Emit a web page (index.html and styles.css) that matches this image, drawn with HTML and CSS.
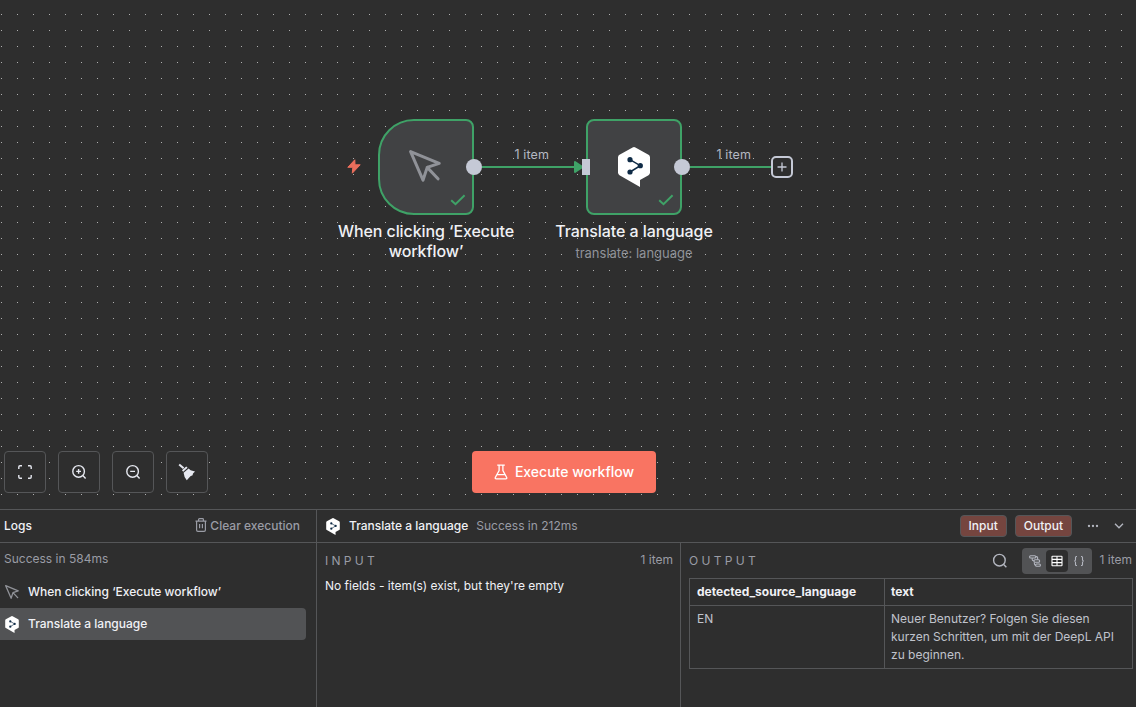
FILE: index.html
```html
<!DOCTYPE html>
<html lang="en">
<head>
    <meta charset="UTF-8">
    <meta name="viewport" content="width=device-width, initial-scale=1.0">
    <title>Workflow</title>
    <link rel="stylesheet" href="styles.css">
</head>
<body>
    <svg class="sprite" width="0" height="0">
        <symbol id="deepl" viewBox="0 0 32 40">
            <path fill="#fff" d="M0 10.4Q0 8.6 1.5 7.7L14.6.4Q16 -.4 17.4.4L30.5 7.7Q32 8.6 32 10.4V25.6Q32 27.4 30.5 28.3L22 33V40L1.5 28.3Q0 27.4 0 25.6Z"/>
            <path fill="none" stroke="#0f2b46" stroke-width="1.5" d="M12 12.7L22.3 18.7L12 25"/>
            <g fill="#0f2b46"><circle cx="12" cy="12.7" r="2.6"/><circle cx="22.3" cy="18.7" r="2.6"/><circle cx="12" cy="25" r="2.6"/></g>
        </symbol>
        <symbol id="pointer" viewBox="0 0 32 32">
            <path fill="none" stroke="#909298" stroke-width="3" stroke-linecap="round" stroke-linejoin="round" d="M1.6 1.6L30.2 13.4L18.2 17.4L14 30.2ZM18.2 17.4L29 28.8"/>
        </symbol>
        <symbol id="check" viewBox="0 0 16 12">
            <path fill="none" stroke="#3fa267" stroke-width="2" d="M1.2 6.2L5.5 10.2L14.6 1.2"/>
        </symbol>
    </svg>

    <div class="app">
        <main class="canvas">
            <svg class="edges" width="1136" height="509">
                <path class="edge" d="M482 167H576M690 167H771"/>
                <path class="arrow" d="M575 162L582.5 167L575 172Z"/>
            </svg>
            <span class="edge-label label-1">1 item</span>
            <span class="edge-label label-2">1 item</span>

            <svg class="bolt" width="14" height="15" viewBox="0 0 14 15"><path fill="#ea6e5c" stroke="#ea6e5c" stroke-linejoin="round" d="M7.8.8L.8 8.3H5.8L5.3 14.2L13.2 5.8H8Z"/></svg>
            <div class="node trigger">
                <svg class="node-icon" width="32" height="32"><use href="#pointer"/></svg>
                <svg class="check" width="16" height="12"><use href="#check"/></svg>
                <i class="handle-out"></i>
                <div class="node-text"><p class="node-name">When clicking ‘Execute workflow’</p></div>
            </div>
            <div class="node action">
                <svg class="node-icon" width="32" height="40"><use href="#deepl"/></svg>
                <svg class="check" width="16" height="12"><use href="#check"/></svg>
                <i class="handle-in"></i>
                <i class="handle-out"></i>
                <div class="node-text"><p class="node-name">Translate a language</p><p class="node-sub">translate: language</p></div>
            </div>
            <div class="plus"><svg width="10" height="10" viewBox="0 0 10 10"><path d="M5 .5V9.5M.5 5H9.5" stroke="#c5c9d6" stroke-width="1.3"/></svg></div>

            <div class="canvas-tools">
                <button class="tool"><svg width="16" height="16" viewBox="0 0 16 16"><path d="M1.8 5V3Q1.8 1.8 3 1.8H5M11 1.8H13Q14.2 1.8 14.2 3V5M14.2 11V13Q14.2 14.2 13 14.2H11M5 14.2H3Q1.8 14.2 1.8 13V11"/></svg></button>
                <button class="tool"><svg width="16" height="16" viewBox="0 0 16 16"><circle cx="7.6" cy="7.4" r="5.8"/><path d="M11.8 11.6L14.6 14.5M7.6 5V9.8M5.2 7.4H10"/></svg></button>
                <button class="tool"><svg width="16" height="16" viewBox="0 0 16 16"><circle cx="7.6" cy="7.4" r="5.8"/><path d="M11.8 11.6L14.6 14.5M5.2 7.4H10"/></svg></button>
                <button class="tool"><svg class="broom" width="18" height="18" viewBox="0 0 18 18"><path class="stick" d="M1.2 1.4L5.6 5.2"/><path class="head" d="M4 7.2L8.2 3.6L9.6 4.8L5.2 8.8ZM5.6 9.8L10.6 5.4L12.6 7.2L17 8.6L15 10.4L14.6 12.2L12.4 13.2L8.8 17.2L6.6 14Z"/></svg></button>
            </div>
            <button class="execute">
                <svg width="14" height="16" viewBox="0 0 14 16"><path d="M3.2 1.2H10.8M5.1 1.2V6.6L1.3 13.4Q.8 14.8 2.2 14.8H11.8Q13.2 14.8 12.7 13.4L8.9 6.6V1.2M3.2 10.6H10.8"/></svg>
                <span>Execute workflow</span>
            </button>
        </main>

        <section class="logs">
            <aside class="overview">
                <header class="bar">
                    <span class="title">Logs</span>
                    <button class="clear"><svg width="12" height="14" viewBox="0 0 12 14"><path d="M.5 3.2H11.5M3.6 3V1.4Q3.6.7 4.4.7H7.6Q8.4.7 8.4 1.4V3M1.6 3.4V12Q1.6 13.3 2.9 13.3H9.1Q10.4 13.3 10.4 12V3.4M4.6 6V10.3M7.4 6V10.3"/></svg>Clear execution</button>
                </header>
                <p class="summary">Success in 584ms</p>
                <div class="row"><svg width="14" height="14"><use href="#pointer"/></svg><span>When clicking ‘Execute workflow’</span></div>
                <div class="row selected"><svg width="14" height="17"><use href="#deepl"/></svg><span>Translate a language</span></div>
            </aside>

            <div class="details">
                <header class="bar">
                    <svg width="14" height="17"><use href="#deepl"/></svg>
                    <span class="title">Translate a language</span>
                    <span class="status">Success in 212ms</span>
                    <div class="actions">
                        <button class="toggle">Input</button>
                        <button class="toggle">Output</button>
                        <svg class="more" width="12" height="4" viewBox="0 0 12 4"><g fill="#b4b7c0"><circle cx="2" cy="2" r="1.15"/><circle cx="6" cy="2" r="1.15"/><circle cx="10" cy="2" r="1.15"/></g></svg>
                        <svg width="10" height="6" viewBox="0 0 10 6"><path d="M1 .8L5 4.8L9 .8" fill="none" stroke="#b4b7c0" stroke-width="1.3"/></svg>
                    </div>
                </header>
                <div class="panels">
                    <div class="panel input">
                        <div class="panel-head"><span class="caps">INPUT</span><span class="count">1 item</span></div>
                        <p class="empty">No fields - item(s) exist, but they're empty</p>
                    </div>
                    <div class="panel output">
                        <div class="panel-head">
                            <span class="caps">OUTPUT</span>
                            <svg class="search" width="16" height="16" viewBox="0 0 16 16"><circle cx="7.4" cy="7.2" r="5.8"/><path d="M11.6 11.4L14.4 14.3"/></svg>
                            <div class="segmented">
                                <span><svg width="12" height="12" viewBox="0 0 12 12"><rect x=".6" y=".8" width="6.2" height="2.2" rx="1"/><path d="M6.8 1.6H7.6Q8.6 1.6 8.6 2.6V4.8M3.2 3V4.6Q3.2 5.8 4.4 5.8H5M5.4 7.4V8.8Q5.4 10.2 6.8 10.2"/><rect x="5" y="4.8" width="5.6" height="2.4" rx="1"/><rect x="6.6" y="9" width="4.8" height="2.2" rx="1"/></svg></span>
                                <span class="active"><svg width="12" height="12" viewBox="0 0 12 12"><rect x="1" y="1.2" width="10" height="9.6" rx=".6"/><path d="M1 4.4H11M1 7.6H11M6 1.2V10.8"/></svg></span>
                                <span><svg width="12" height="12" viewBox="0 0 12 12"><path d="M4 1.5H3.4Q2.5 1.5 2.5 2.5V4.8Q2.5 6 1.2 6Q2.5 6 2.5 7.2V9.5Q2.5 10.5 3.4 10.5H4M8 1.5H8.6Q9.5 1.5 9.5 2.5V4.8Q9.5 6 10.8 6Q9.5 6 9.5 7.2V9.5Q9.5 10.5 8.6 10.5H8"/></svg></span>
                            </div>
                            <span class="count">1 item</span>
                        </div>
                        <table>
                            <tr><th class="lang">detected_source_language</th><th>text</th></tr>
                            <tr><td>EN</td><td>Neuer Benutzer? Folgen Sie diesen kurzen Schritten, um mit der DeepL API zu beginnen.</td></tr>
                        </table>
                    </div>
                </div>
            </div>
        </section>
    </div>
</body>
</html>
```
FILE: styles.css
```css
* {
    box-sizing: border-box;
}
body {
    margin: 0;
    background: #2e2e2e;
    color: #f0f1f5;
    font-family: Inter, sans-serif;
    font-size: 12px;
    overflow: hidden;
}
p {
    margin: 0;
}
svg {
    display: block;
    flex: none;
}
button {
    font: inherit;
    color: inherit;
    background: none;
    border: 0;
    padding: 0;
}
.sprite {
    position: absolute;
}
.app {
    display: flex;
    flex-direction: column;
    height: 707px;
}

/* canvas */
.canvas {
    position: relative;
    height: 509px;
    flex: none;
    background: conic-gradient(from 270deg at 1px 1px, #b0b0b0 90deg, transparent 0) 1px 14px / 16px 16px;
}
.edges {
    position: absolute;
    left: 0;
    top: 0;
}
.edge {
    stroke: #3fa267;
    stroke-width: 2;
}
.arrow {
    fill: #3fa267;
    stroke: #3fa267;
    stroke-width: 2;
    stroke-linejoin: round;
}
.edge-label {
    position: absolute;
    top: 147px;
    font-size: 12.5px;
    line-height: 16px;
    color: #b5b8c2;
    letter-spacing: .1px;
}
.label-1 {
    left: 514.5px;
}
.label-2 {
    left: 716.5px;
}
.bolt {
    position: absolute;
    left: 347px;
    top: 159px;
}
.node {
    position: absolute;
    top: 119px;
    width: 96px;
    height: 96px;
    border: 2px solid #3fa267;
    border-radius: 8px;
    background: #414244;
    display: flex;
    align-items: center;
    justify-content: center;
}
.trigger {
    left: 378px;
    border-radius: 36px 8px 8px 36px;
}
.trigger .node-icon {
    margin: 0 2px 2px 0;
}
.action {
    left: 586px;
}
.check {
    position: absolute;
    right: 6px;
    bottom: 7px;
}
.handle-out {
    position: absolute;
    right: -10px;
    top: 38px;
    width: 16px;
    height: 16px;
    border-radius: 50%;
    background: #c5c9d6;
}
.handle-in {
    position: absolute;
    left: -6px;
    top: 38px;
    width: 8px;
    height: 16px;
    background: #c5c9d6;
}
.node-text {
    position: absolute;
    top: 100px;
    left: -52px;
    width: 196px;
    text-align: center;
}
.node-name {
    font-size: 16px;
    line-height: 20px;
    font-weight: 500;
    letter-spacing: -.08px;
}
.node-sub {
    margin-top: 4px;
    font-size: 13px;
    line-height: 16px;
    color: #909298;
}
.plus {
    position: absolute;
    left: 771px;
    top: 156px;
    width: 22px;
    height: 22px;
    border: 2px solid #c5c9d6;
    border-radius: 5px;
    background: #2e2e2e;
    display: flex;
    align-items: center;
    justify-content: center;
}
.canvas-tools {
    position: absolute;
    left: 4px;
    bottom: 16px;
    display: flex;
    gap: 12px;
}
.tool {
    width: 42px;
    height: 42px;
    border: 1px solid #555658;
    border-radius: 4px;
    background: #2e2e2e;
    display: flex;
    align-items: center;
    justify-content: center;
}
.tool svg {
    fill: none;
    stroke: #e6e8f0;
    stroke-width: 1.4;
}
.broom .head {
    fill: #e6e8f0;
    stroke: none;
}
.broom .stick {
    stroke-width: 2;
}
.execute {
    position: absolute;
    left: 472px;
    bottom: 16px;
    width: 184px;
    height: 42px;
    border-radius: 4px;
    background: #f97462;
    color: #fff;
    font-size: 14px;
    font-weight: 500;
    display: flex;
    align-items: center;
    justify-content: center;
    gap: 7px;
}
.execute span {
    padding-bottom: 2px;
}
.execute svg {
    fill: none;
    stroke: #fff;
    stroke-width: 1.3;
}

/* logs panel */
.logs {
    flex: 1;
    display: flex;
    border-top: 1px solid #555658;
}
.overview {
    width: 316px;
    flex: none;
}
.bar {
    height: 33px;
    border-bottom: 1px solid #555658;
    display: flex;
    align-items: center;
}
.title {
    font-weight: 500;
}
.title,
.status,
.row span {
    padding-bottom: 2px;
}
.overview .bar {
    padding: 0 16px 0 4px;
    justify-content: space-between;
}
.clear {
    display: flex;
    align-items: center;
    gap: 3px;
    color: #9a9ca5;
    font-weight: 500;
    padding-bottom: 2px;
}
.clear svg {
    fill: none;
    stroke: #9a9ca5;
    stroke-width: 1.2;
}
.summary {
    padding: 8px 4px;
    line-height: 16px;
    height: 33px;
    color: #9a9ca5;
}
.row {
    height: 32px;
    width: 306px;
    padding-left: 5px;
    display: flex;
    align-items: center;
    gap: 9px;
    font-weight: 500;
    border-radius: 0 4px 4px 0;
}
.selected {
    background: #525355;
}
.details {
    flex: 1;
    border-left: 1px solid #555658;
    display: flex;
    flex-direction: column;
}
.details .bar {
    padding: 0 12px 0 9px;
}
.details .title {
    margin-left: 9px;
}
.status {
    margin-left: 8px;
    color: #9a9ca5;
}
.actions {
    margin-left: auto;
    display: flex;
    align-items: center;
    gap: 8px;
}
.toggle {
    height: 22px;
    padding: 0 8px 1px;
    border: 1px solid #555658;
    border-radius: 4px;
    background: #75453f;
    font-weight: 500;
}
.more {
    margin: 0 7px;
}
.panels {
    flex: 1;
    display: flex;
}
.panel {
    padding: 0 8px;
}
.input {
    width: 363px;
}
.output {
    flex: 1;
    border-left: 1px solid #555658;
    padding-right: 3px;
}
.panel-head {
    height: 35px;
    display: flex;
    align-items: center;
}
.caps {
    flex: 1;
    color: #9a9ca5;
    letter-spacing: 3.3px;
}
.count {
    color: #9a9ca5;
    padding-bottom: 2px;
}
.input .panel-head {
    margin-right: -1px;
}
.output .panel-head {
    padding-right: 1px;
}
.empty {
    line-height: 16px;
}
.search {
    fill: none;
    stroke: #b4b7c0;
    stroke-width: 1.4;
    margin-right: 14px;
}
.segmented {
    height: 26px;
    padding: 2px;
    border-radius: 4px;
    background: #525355;
    display: flex;
    margin-right: 8px;
}
.segmented span {
    width: 22px;
    display: flex;
    align-items: center;
    justify-content: center;
    border-radius: 4px;
}
.segmented .active {
    background: #2e2e2e;
}
.segmented svg {
    fill: none;
    stroke: #b4b7c0;
    stroke-width: 1.1;
}
.segmented .active svg {
    stroke: #fff;
}
table {
    width: 444px;
    border-collapse: collapse;
    table-layout: fixed;
    line-height: 18px;
}
th,
td {
    border: 1px solid #555658;
    padding: 4px 6px;
    text-align: left;
    vertical-align: top;
}
th:first-child,
td:first-child {
    padding-left: 7px;
}
th {
    font-weight: 700;
}
td {
    color: #c0c3cc;
}
.lang {
    width: 195px;
}
```
